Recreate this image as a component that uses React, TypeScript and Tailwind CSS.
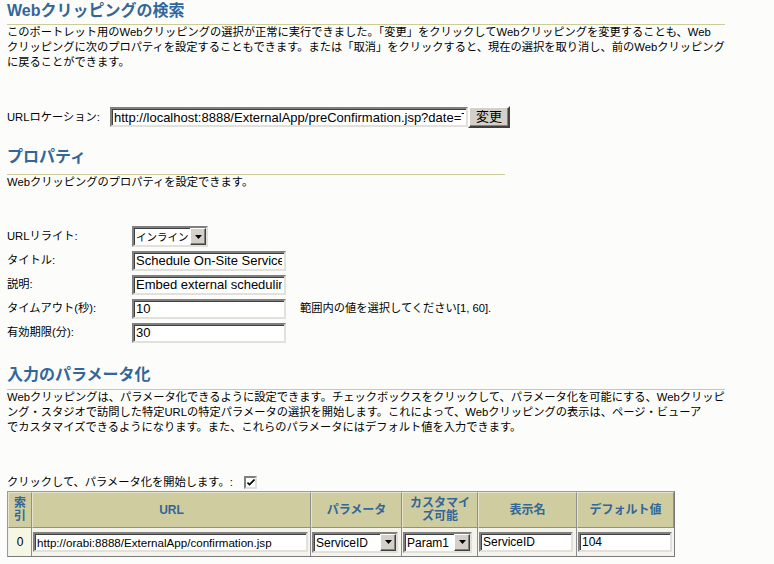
import React from 'react';

const font = "font-['Liberation_Sans','Noto_Sans_CJK_JP',sans-serif]";

function TextBox({ value, className }: { value: string; className: string }) {
  return (
    <input
      readOnly
      value={value}
      className={`h-[20px] border-2 border-[#e2e0da] border-t-[#808080] border-l-[#808080] shadow-[inset_1px_1px_0_#404040] bg-white px-[2px] text-black outline-none ${font} ${className}`}
    />
  );
}

function Arrow() {
  return (
    <div className="w-[16px] h-full bg-[#d4d0c8] border border-white border-r-[#404040] border-b-[#404040] shadow-[inset_-1px_-1px_0_#808080] flex items-center justify-center">
      <svg width="7" height="4" viewBox="0 0 7 4">
        <path d="M0 0h7L3.5 4z" fill="#000" />
      </svg>
    </div>
  );
}

function Select({ value, className }: { value: string; className: string }) {
  return (
    <div className={`h-[21px] flex border-2 border-[#e2e0da] border-t-[#808080] border-l-[#808080] shadow-[inset_1px_1px_0_#404040] bg-white ${className}`}>
      <div className="flex-1 pl-[2px] pt-[1px] leading-[16px] whitespace-nowrap overflow-hidden">{value}</div>
      <Arrow />
    </div>
  );
}

function Heading({ children, className }: { children: React.ReactNode; className: string }) {
  return (
    <h2 className={`text-[16px] font-bold text-[#336699] leading-[22px] border-b border-[#cccc99] ${className}`}>
      {children}
    </h2>
  );
}

export default function App() {
  return (
    <div className={`min-h-screen bg-[#fcfdfa] pl-[7px] text-[11.25px] text-black ${font}`}>
      {/* Webクリッピングの検索 */}
      <Heading className="w-[718px] pb-[2px]">Webクリッピングの検索</Heading>
      <p className="leading-[15px] whitespace-nowrap">
        このポートレット用のWebクリッピングの選択が正常に実行できました。「変更」をクリックしてWebクリッピングを変更することも、Web
        <br />
        クリッピングに次のプロパティを設定することもできます。または「取消」をクリックすると、現在の選択を取り消し、前のWebクリッピング
        <br />
        に戻ることができます。
      </p>

      <div className="mt-[36px] flex items-center h-[22px]">
        <div className="w-[103px]">URLロケーション:</div>
        <TextBox value="http://localhost:8888/ExternalApp/preConfirmation.jsp?date=T" className="w-[358px] text-[13px]" />
        <button className="h-[22px] px-[6px] bg-[#d4d0c8] border-2 border-white border-r-[#404040] border-b-[#404040] shadow-[inset_-1px_-1px_0_#808080] text-[13px] leading-[16px]">
          変更
        </button>
      </div>

      {/* プロパティ */}
      <Heading className="w-[498px] mt-[18px] pb-[6px]">プロパティ</Heading>
      <p className="leading-[15px]">Webクリッピングのプロパティを設定できます。</p>

      <div className="mt-[36px] flex flex-col gap-[3px]">
        <div className="flex items-center h-[21px]">
          <div className="w-[125px]">URLリライト:</div>
          <Select value="インライン" className="w-[76px] text-[10.5px]" />
        </div>
        <div className="flex items-center h-[21px]">
          <div className="w-[125px]">タイトル:</div>
          <TextBox value="Schedule On-Site Services" className="w-[154px] text-[13px]" />
        </div>
        <div className="flex items-center h-[21px]">
          <div className="w-[125px]">説明:</div>
          <TextBox value="Embed external scheduling service" className="w-[154px] text-[13px]" />
        </div>
        <div className="flex items-center h-[21px]">
          <div className="w-[125px]">タイムアウト(秒):</div>
          <TextBox value="10" className="w-[154px] text-[13px]" />
          <span className="ml-[14px]">範囲内の値を選択してください[1, 60].</span>
        </div>
        <div className="flex items-center h-[21px]">
          <div className="w-[125px]">有効期限(分):</div>
          <TextBox value="30" className="w-[154px] text-[13px]" />
        </div>
      </div>

      {/* 入力のパラメータ化 */}
      <Heading className="w-[718px] mt-[21px] pb-[3px]">入力のパラメータ化</Heading>
      <p className="leading-[15px] whitespace-nowrap">
        Webクリッピングは、パラメータ化できるように設定できます。チェックボックスをクリックして、パラメータ化を可能にする、Webクリッピ
        <br />
        ング・スタジオで訪問した特定URLの特定パラメータの選択を開始します。これによって、Webクリッピングの表示は、ページ・ビューア
        <br />
        でカスタマイズできるようになります。また、これらのパラメータにはデフォルト値を入力できます。
      </p>

      <div className="mt-[40px] flex items-center h-[15px]">
        <span className="w-[237px]">クリックして、パラメータ化を開始します。:</span>
        <div className="w-[13px] h-[13px] bg-white border-2 border-[#e2e0da] border-t-[#808080] border-l-[#808080] flex items-center justify-center">
          <svg width="8" height="7" viewBox="0 0 8 7">
            <path d="M0.5 3.5l2 2 5-5" stroke="#000" strokeWidth="1.6" fill="none" />
          </svg>
        </div>
      </div>

      <table className="mt-[1px] border-separate border-spacing-0 border border-[#9a9a9a] border-r-[#7a7a7a] border-b-[#7a7a7a] table-fixed w-[668px]">
        <colgroup>
          <col className="w-[24px]" />
          <col className="w-[279px]" />
          <col className="w-[91px]" />
          <col className="w-[76px]" />
          <col className="w-[99px]" />
          <col />
        </colgroup>
        <thead>
          <tr className="h-[36px] text-[12px] font-bold text-[#336699] leading-[13px]">
            {[
              <>索<br />引</>,
              'URL',
              'パラメータ',
              <>カスタマイ<br />ズ可能</>,
              '表示名',
              'デフォルト値',
            ].map((h, i) => (
              <th
                key={i}
                className="bg-[#cfcc9f] border-r border-b border-[#8f8f8f] border-l border-l-[#e6e4cc] border-t border-t-[#e6e4cc] text-center align-middle p-0"
              >
                {h}
              </th>
            ))}
          </tr>
        </thead>
        <tbody className="text-[12px]">
          <tr className="h-[28px]">
            <td className="bg-[#f6f6e4] text-center border-r border-[#8f8f8f] border-l border-l-[#eeeeea] p-0">0</td>
            <td className="bg-[#f4f4ec] border-r border-[#8f8f8f] px-[1px] py-0">
              <TextBox value="http://orabi:8888/ExternalApp/confirmation.jsp" className="w-[275px] text-[11.6px]" />
            </td>
            <td className="bg-[#f4f4ec] border-r border-[#8f8f8f] px-[1px] py-0">
              <Select value="ServiceID" className="w-[86px] text-[12px]" />
            </td>
            <td className="bg-[#f4f4ec] border-r border-[#8f8f8f] px-[1px] py-0">
              <Select value="Param1" className="w-[69px] text-[12px]" />
            </td>
            <td className="bg-[#f4f4ec] border-r border-[#8f8f8f] px-[1px] py-0">
              <TextBox value="ServiceID" className="w-[94px] text-[12px]" />
            </td>
            <td className="bg-[#f4f4ec] px-[1px] py-0">
              <TextBox value="104" className="w-[94px] text-[12px]" />
            </td>
          </tr>
        </tbody>
      </table>
    </div>
  );
}
